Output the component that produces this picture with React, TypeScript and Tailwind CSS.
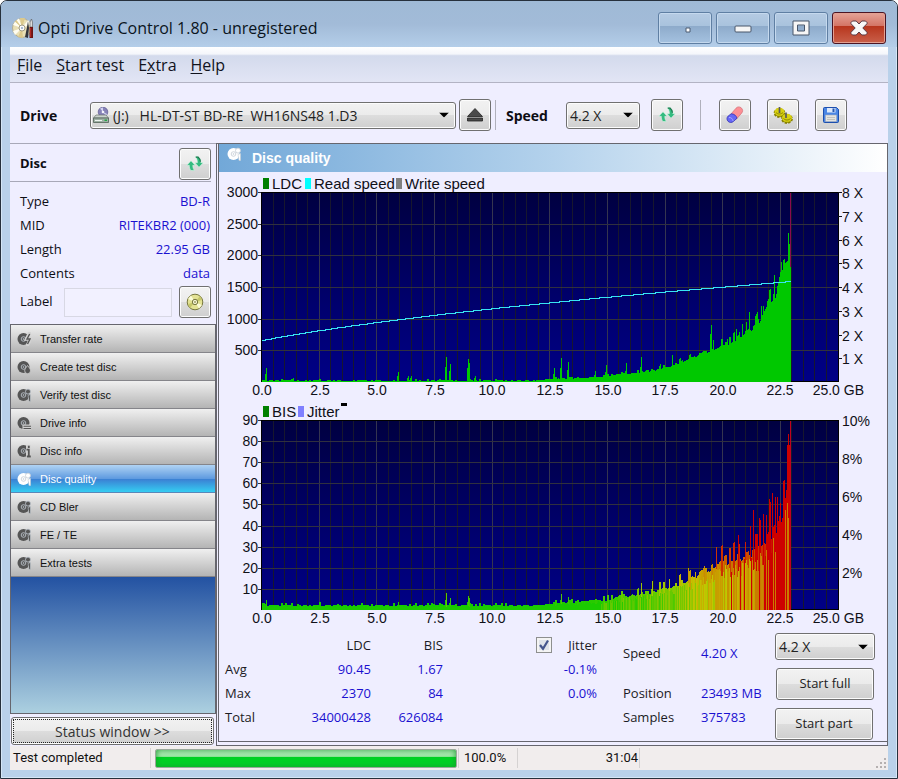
import { useState } from "react";
import type { ReactNode } from "react";
import clsx from "clsx";

const uiFont = "font-['Open_Sans','Noto_Sans',sans-serif]";
const arial = "font-['Liberation_Sans',Arial,sans-serif]";

const buttonFace =
  "rounded-[3px] border border-[#707070] bg-[linear-gradient(#f2f2f2_0%,#ebebeb_50%,#dddddd_50%,#cfcfcf_100%)] shadow-[inset_0_0_0_1px_#fcfcfc]";

const discInfo = [
  { label: "Type", value: "BD-R" },
  { label: "MID", value: "RITEKBR2 (000)" },
  { label: "Length", value: "22.95 GB" },
  { label: "Contents", value: "data" },
];

type BadgeName = "bolt" | "drop" | "magnifier" | "drive" | "info";

const navItems: { label: string; badge: BadgeName }[] = [
  { label: "Transfer rate", badge: "bolt" },
  { label: "Create test disc", badge: "drop" },
  { label: "Verify test disc", badge: "magnifier" },
  { label: "Drive info", badge: "drive" },
  { label: "Disc info", badge: "info" },
  { label: "Disc quality", badge: "magnifier" },
  { label: "CD Bler", badge: "magnifier" },
  { label: "FE / TE", badge: "magnifier" },
  { label: "Extra tests", badge: "magnifier" },
];

// ---- chart data -----------------------------------------------------------

const PLOT = { left: 42, top: 20, width: 577, height: 190 };
const BOTTOM = PLOT.top + PLOT.height;
const SCANNED = 530;

type Point = [number, number];

const ldcBase: Point[] = [
  [0, 1], [270, 1], [300, 3], [335, 4], [370, 8], [400, 12], [421, 19],
  [438, 26], [460, 33], [471, 38], [483, 46], [493, 53], [500, 62],
  [508, 77], [514, 84], [518, 98], [521, 112], [525, 116], [530, 116],
];

const ldcSpikes: Point[] = [
  [5, 14], [32, 4], [137, 10], [147, 6], [150, 6], [185, 25], [189, 18],
  [207, 23], [208, 19], [214, 6], [293, 14], [300, 24], [307, 20], [334, 11],
  [345, 17], [365, 19], [380, 25], [399, 18], [411, 27], [450, 57], [449, 48],
  [452, 42], [466, 43], [475, 53], [478, 50], [481, 58], [485, 60], [488, 70],
  [496, 70], [500, 76], [502, 76], [513, 107], [520, 120], [522, 121],
  [527, 149], [528, 138],
];

const bisBase: Point[] = [
  [0, 4], [270, 4], [310, 7], [345, 9], [370, 13], [400, 18], [425, 26],
  [445, 36], [460, 42], [480, 48], [495, 54], [505, 62], [515, 76],
  [520, 88], [523, 98], [526, 120], [530, 155],
];

const bisSpikes: Point[] = [
  [5, 10], [137, 8], [185, 17], [189, 12], [207, 14], [208, 12], [300, 16],
  [307, 13], [380, 27], [391, 29], [408, 31], [427, 42], [434, 38], [443, 44],
  [455, 63], [461, 57], [463, 54], [473, 58], [477, 75], [478, 66], [484, 68],
  [489, 84], [492, 100], [496, 76], [498, 92], [499, 90], [502, 96], [505, 95],
  [508, 111], [509, 108], [511, 117], [514, 113], [516, 113], [519, 107],
  [522, 129], [523, 130], [526, 165], [527, 176], [528, 165], [529, 189],
];

function noise(seed: number): number {
  const value = Math.sin(seed * 127.1 + 11.7) * 43758.5453;
  return value - Math.floor(value);
}

function interpolate(points: Point[], x: number): number {
  for (let i = 1; i < points.length; i++) {
    const [x0, y0] = points[i - 1];
    const [x1, y1] = points[i];
    if (x <= x1) return y0 + ((y1 - y0) * (x - x0)) / (x1 - x0);
  }
  return points[points.length - 1][1];
}

function buildBars(base: Point[], spikes: Point[], roughness: number): number[] {
  const bars: number[] = [];
  for (let x = 0; x < SCANNED; x++) {
    const level = interpolate(base, x);
    const step = Math.floor(x / 2);
    const jump = noise(step + 400) > 0.7 ? 1.8 : 0.7;
    bars.push(Math.round(level + noise(step) * jump * (1 + level * roughness)));
  }
  spikes.forEach(([x, height]) => {
    bars[x] = Math.max(bars[x], height);
    bars[x - 1] = Math.max(bars[x - 1], Math.round(height * 0.6));
  });
  return bars;
}

const ldcBars = buildBars(ldcBase, ldcSpikes, 0.14);
const bisBars = buildBars(bisBase, bisSpikes, 0.28);

function barColor(height: number): string {
  const ratio = Math.min(Math.max((height - 7) / 68, 0), 1);
  if (ratio < 0.38) {
    return `rgb(${Math.round(20 + 175 * (ratio / 0.38))} ${Math.round(203 - 14 * ratio)} 0)`;
  }
  return `rgb(${Math.round(195 + 10 * ratio)} ${Math.round(192 * (1 - (ratio - 0.38) / 0.62))} 0)`;
}

// Constant angular velocity: the squared speed grows linearly with position.
function readSpeedHeight(x: number): number {
  return Math.round(Math.sqrt(1764 + (8437 * x) / SCANNED));
}

const speedPath = Array.from({ length: Math.ceil(SCANNED / 2) }, (_, i) => {
  const x = i * 2;
  const y = BOTTOM - readSpeedHeight(x);
  return `${i === 0 ? `M${PLOT.left} ${y}` : `V${y}`}H${PLOT.left + x + 2}`;
}).join("");

type ChartProps = {
  title: string;
  gradientId: string;
  legend: { x: number; color: string; label: string }[];
  leftLabels: string[];
  rightLabels: { y: number; label: string }[];
  rightTicks?: boolean;
  children: ReactNode;
};

function Chart({
  title,
  gradientId,
  legend,
  leftLabels,
  rightLabels,
  rightTicks = false,
  children,
}: ChartProps) {
  const rowHeight = PLOT.height / leftLabels.length;

  return (
    <svg
      viewBox="0 0 668 228"
      role="img"
      aria-label={title}
      className={clsx("block h-auto w-full fill-[#101018] text-[14px]", arial)}
    >
      <defs>
        <linearGradient id={gradientId} x1="0" y1="0" x2="0" y2="1">
          <stop offset="0" stopColor="#000040" />
          <stop offset="0.6" stopColor="#00006e" />
          <stop offset="1" stopColor="#000086" />
        </linearGradient>
      </defs>

      {legend.map((item) => (
        <g key={item.label}>
          <rect x={item.x} y={6} width={6} height={11} fill={item.color} />
          <text x={item.x + 9} y={17} className="text-[15px]">
            {item.label}
          </text>
        </g>
      ))}

      <g shapeRendering="crispEdges">
        <rect
          x={PLOT.left}
          y={PLOT.top}
          width={PLOT.width}
          height={PLOT.height}
          fill={`url(#${gradientId})`}
        />
        {Array.from({ length: 51 }, (_, i) => (
          <rect
            key={i}
            x={Math.round(PLOT.left + i * 11.53)}
            y={PLOT.top}
            width={1}
            height={PLOT.height}
            fill={i % 5 === 0 ? "#35354f" : "#17172e"}
          />
        ))}
        {leftLabels.map((label, i) => (
          <rect
            key={label}
            x={PLOT.left - 3}
            y={Math.round(PLOT.top + i * rowHeight)}
            width={PLOT.width + 3}
            height={1}
            fill="#30303f"
          />
        ))}
        {children}
        <path
          d={`M${PLOT.left} ${BOTTOM}V${PLOT.top}H${PLOT.left + PLOT.width}V${BOTTOM}`}
          fill="none"
          stroke="#000"
        />
        <rect x={PLOT.left + SCANNED} y={BOTTOM - 1} width={47} height={1} fill="#000" />
      </g>

      {leftLabels.map((label, i) => (
        <text key={label} x={39} y={Math.round(PLOT.top + i * rowHeight) + 5} textAnchor="end">
          {label}
        </text>
      ))}
      {rightLabels.map((item) => (
        <g key={item.label}>
          {rightTicks ? (
            <rect x={PLOT.left + PLOT.width} y={item.y} width={4} height={1} />
          ) : null}
          <text x={623} y={item.y + 6}>
            {item.label}
          </text>
        </g>
      ))}
      {["0.0", "2.5", "5.0", "7.5", "10.0", "12.5", "15.0", "17.5", "20.0", "22.5"].map(
        (label, i) => (
          <text key={label} x={Math.round(43 + i * 57.6)} y={223} textAnchor="middle">
            {label}
          </text>
        ),
      )}
      <text x={645} y={223} textAnchor="end">
        25.0 GB
      </text>
    </svg>
  );
}

// ---- icons ----------------------------------------------------------------

function AppIcon() {
  return (
    <svg viewBox="0 0 22 22" className="size-[22px] shrink-0" aria-hidden="true">
      <circle cx="10" cy="11" r="9.5" fill="#e9dfb4" stroke="#b3ad92" />
      <path d="M10 11 1 8 3 4.500zM10 11 7 1.500 4 3.500zM10 11 16 3l3 4zM10 11 1 14l2 4z" fill="#fffdf0" />
      <path d="M10 11 8 1h5zM10 11 6 20l5 1zM10 11 3 4.500 4.500 3z" fill="#dcc98c" />
      <circle cx="10" cy="11" r="3" fill="#fafafa" stroke="#8c8770" strokeWidth=".8" />
      <circle cx="10" cy="11" r="1" fill="#8fa9c4" />
      <path d="M13 20 15 10l1-6 1 7-1 10z" fill="#31343c" />
      <path d="M18 10V5l1.500-3 1 3v5z" fill="#dcdcdc" stroke="#555" strokeWidth=".6" />
      <path d="M17.500 10h3.500v11h-3.500z" fill="#6c1413" />
      <path d="M18.300 11h.9v9h-.9z" fill="#c9302b" />
    </svg>
  );
}

function DriveIcon() {
  return (
    <svg viewBox="0 0 16 16" className="size-4" aria-hidden="true">
      <circle cx="10" cy="5" r="4.800" fill="#8783b8" stroke="#5b5890" strokeWidth=".7" />
      <path d="M10 5 7 1.500l3-1zM10 5l4 2-1 2z" fill="#d4d5f2" />
      <circle cx="10" cy="5" r="1.300" fill="#f4f4fb" />
      <path d="M3 8h10l2.500 3h-15z" fill="#c9d2cc" stroke="#6b776f" strokeWidth=".7" />
      <path d="M.5 11h15v4.500H.5z" fill="#9eb0a4" stroke="#4f5f55" strokeWidth=".8" />
      <path d="M2 13h7v1H2z" fill="#eef4ef" />
      <path d="M11.500 12.500h2.500v1.500h-2.500z" fill="#25a544" />
    </svg>
  );
}

function RefreshIcon() {
  return (
    <svg viewBox="0 0 18 18" className="size-[18px]" aria-hidden="true">
      <path
        d="M5 5.800.8 10.300h2.500c0 2.200.5 3.900 1.700 5.200h3.500C7.300 14.200 6.800 12.500 6.800 10.300h2.400z"
        fill="#35bb80"
        stroke="#d5f5e4"
        strokeWidth=".6"
      />
      <path
        d="M13 12.200 17.200 7.700h-2.300c0-2.600-.8-4.500-2.900-5.900H9.200c1.600 1.500 2.200 3.200 2.200 5.900H9z"
        fill="#35bb80"
        stroke="#d5f5e4"
        strokeWidth=".6"
      />
      <path d="M9.800 2.200h2.400c1.400 1.200 2.100 2.600 2.300 4.500" fill="none" stroke="#1d7a4f" strokeWidth="1.200" />
    </svg>
  );
}

function EjectIcon() {
  return (
    <svg viewBox="0 0 18 16" className="h-4 w-[18px]" aria-hidden="true">
      <path d="M9 1.500 16.500 9.500h-15z" fill="#4a4a4a" stroke="#222" strokeWidth=".8" />
      <path d="M1.500 11h15v3h-15z" fill="#4a4a4a" stroke="#222" strokeWidth=".8" />
    </svg>
  );
}

function EraserIcon() {
  return (
    <svg viewBox="0 0 18 18" className="size-[18px]" aria-hidden="true">
      <path
        d="M5 8 10 2.200c1.400-1.600 3.500-1.700 5.200-.4 1.700 1.500 1.900 3.700.4 5.400L10.500 13z"
        fill="#fd8f94"
        stroke="#d36d74"
        strokeWidth=".7"
      />
      <path
        d="M5.200 7.800 2.200 10c-1.600 1.500-1.600 3.800-.2 5.300 1.500 1.500 3.900 1.600 5.400.2l3.600-3.300C10.500 9.800 8 7.800 5.200 7.800z"
        fill="#6767f5"
        stroke="#3434b5"
        strokeWidth=".8"
      />
      <path d="M3 11.500c2-.2 3.900 1.400 4 3.400" fill="none" stroke="#a9a9ff" />
    </svg>
  );
}

function GearsIcon() {
  return (
    <svg viewBox="0 0 20 18" className="h-[18px] w-5" aria-hidden="true">
      <ellipse cx="6.500" cy="7" rx="5" ry="4" fill="#a39c00" stroke="#857f00" strokeDasharray="2.200 1.300" strokeWidth="1.800" />
      <ellipse cx="6.500" cy="5.800" rx="5" ry="4" fill="#d6cf10" />
      <ellipse cx="14" cy="13" rx="5" ry="4" fill="#a39c00" stroke="#857f00" strokeDasharray="2.200 1.300" strokeWidth="1.800" />
      <ellipse cx="14" cy="11.800" rx="5" ry="4" fill="#d6cf10" />
      <path d="M6.500 1v6M13 6.500V12" stroke="#59595d" strokeWidth="1.700" />
      <path d="M3 6.500c1.800 2 5 2 7 0M10.500 12.500c1.800 2 5 2 7 0" fill="none" stroke="#8a8400" />
    </svg>
  );
}

function SaveIcon() {
  return (
    <svg viewBox="0 0 18 18" className="size-[18px]" aria-hidden="true">
      <path d="M1.500 2.500q0-1 1-1h12l2 2v12q0 1-1 1h-13q-1 0-1-1z" fill="#4a86e4" stroke="#1d4fad" />
      <path d="M5 2h8.500v4.500H5z" fill="#dde9fa" />
      <path d="M10.500 2.500h2v3.500h-2z" fill="#2858b0" />
      <path d="M3.500 9h11v6.500h-11z" fill="#e4e4e0" stroke="#a3aab8" strokeWidth=".6" />
      <path d="M5 11.500h8M5 13.500h8" stroke="#b9b9b4" strokeWidth=".8" />
    </svg>
  );
}

function YellowDiscIcon() {
  return (
    <svg viewBox="0 0 18 18" className="size-[18px]" aria-hidden="true">
      <circle cx="9" cy="9" r="7.800" fill="#e4e394" stroke="#77773f" />
      <path d="M9 9 5 2.500 2 6zM9 9l4 6.500 3-3.500z" fill="#fbfbd6" />
      <path d="M9 9 14 3l2 4zM9 9l-5 6-2-4z" fill="#c6c76b" />
      <circle cx="9" cy="9" r="2.700" fill="#f2f2cf" stroke="#77773f" />
      <circle cx="9" cy="9" r=".9" fill="#999965" />
    </svg>
  );
}

function DiscBadgeIcon({ badge }: { badge: BadgeName }) {
  return (
    <svg viewBox="0 0 14 14" className="size-3.5 shrink-0" fill="none" stroke="currentColor" aria-hidden="true">
      <circle cx="6.500" cy="7" r="6" fill="currentColor" stroke="none" />
      <circle cx="6.500" cy="7" r="2.300" stroke="#c4ccd4" strokeWidth=".8" />
      <circle cx="6.500" cy="7" r=".8" fill="#c4ccd4" stroke="none" />
      {badge === "bolt" ? (
        <g>
          <path d="M13 0 9.500 7h4L10 14" stroke="#d2d2d2" strokeWidth="3.400" />
          <path d="M12.700 2 10 7h3l-2.500 5" strokeWidth="1.400" />
        </g>
      ) : null}
      {badge === "drop" ? (
        <path
          d="M10.500 5.500c2 2.500 3 3.800 3 5.300a2.900 2.900 0 0 1-5.800 0c0-1.500 1-2.800 2.800-5.300z"
          fill="currentColor"
          stroke="#d2d2d2"
          strokeWidth=".8"
        />
      ) : null}
      {badge === "magnifier" ? (
        <g>
          <path d="M13.500 6.500v7h-1.500l-1-6z" fill="currentColor" stroke="#c4ccd4" strokeWidth=".6" />
          <circle cx="11" cy="3.600" r="2.500" fill="currentColor" stroke="#c4ccd4" strokeWidth=".8" />
        </g>
      ) : null}
      {badge === "drive" ? (
        <g>
          <path d="M5.500 8.500H14V14H5.500z" fill="#cfcfcf" stroke="none" />
          <path d="M6.500 10.300H14M6.500 12.500H14" strokeWidth="1.100" />
        </g>
      ) : null}
      {badge === "info" ? (
        <g>
          <path d="M9 1h4.500v13H9z" fill="#d2d2d2" stroke="none" />
          <path d="M9.500 5.700h2.300V12M9.800 12.500h4M11.800 1.800v2.200" strokeWidth="1.800" />
        </g>
      ) : null}
    </svg>
  );
}

function DropArrow() {
  return (
    <svg
      viewBox="0 0 10 5"
      className="pointer-events-none absolute top-1/2 right-[7px] h-[5px] w-2.5 -translate-y-1/2"
      aria-hidden="true"
    >
      <path d="M0 0h10L5 5z" fill="#000" />
    </svg>
  );
}

// ---- window parts ---------------------------------------------------------

function CaptionButton({
  label,
  close = false,
  children,
}: {
  label: string;
  close?: boolean;
  children: ReactNode;
}) {
  return (
    <button
      type="button"
      aria-label={label}
      className={clsx(
        "grid h-8 w-[54px] place-items-center rounded-[3px] border",
        close
          ? "border-[#4b1423] bg-[linear-gradient(#e5a397_0%,#d37263_45%,#b8361e_45%,#c9604a_100%)] shadow-[inset_0_0_0_1px_#e3a091]"
          : "border-[#5f7fa3] bg-[linear-gradient(#b5cbe3_0%,#a8c2dd_45%,#8eabcb_45%,#a5c2e0_100%)] shadow-[inset_0_0_0_1px_#c5d9ee]",
      )}
    >
      {children}
    </button>
  );
}

function ToolButton({ label, children }: { label: string; children: ReactNode }) {
  return (
    <button
      type="button"
      aria-label={label}
      className={clsx("grid h-8 w-8 shrink-0 place-items-center", buttonFace)}
    >
      {children}
    </button>
  );
}

function SpeedSelect({ label, id, className }: { label: string; id: string; className: string }) {
  return (
    <div className={clsx("relative", className)}>
      <select
        id={id}
        aria-label={label}
        className={clsx("block h-[27px] w-full appearance-none pl-[3px] text-[14px] text-[#222]", buttonFace)}
      >
        <option>4.2 X</option>
      </select>
      <DropArrow />
    </div>
  );
}

function TitleBar() {
  return (
    <header className="flex h-[46px] items-center bg-[linear-gradient(#9fbad6_0%,#a2bbd8_50%,#b4cee9_100%)] pr-[11px] pl-[11px]">
      <span className="mt-2">
        <AppIcon />
      </span>
      <h1 className="ml-1 flex-1 pt-2 text-[16px] leading-6 text-[#0a1420]">
        Opti Drive Control 1.80 - unregistered
      </h1>
      <div className="flex gap-1 pt-2">
        <CaptionButton label="Options">
          <svg viewBox="0 0 6 6" className="mt-1 ml-1.5 size-1.5" aria-hidden="true">
            <path d="M1 1h4v4H1z" fill="#fff" stroke="#4a5a70" />
          </svg>
        </CaptionButton>
        <CaptionButton label="Minimize">
          <svg viewBox="0 0 18 8" className="mt-0.5 h-2 w-[18px]" aria-hidden="true">
            <rect x="1" y="1" width="16" height="6" rx="1" fill="#f6f6f6" stroke="#48566b" />
          </svg>
        </CaptionButton>
        <CaptionButton label="Maximize">
          <svg viewBox="0 0 18 16" className="h-4 w-[18px]" aria-hidden="true">
            <path
              d="M1 1h16v14H1zM5.500 5v6h7V5z"
              fill="#f6f6f6"
              fillRule="evenodd"
              stroke="#48566b"
            />
          </svg>
        </CaptionButton>
        <CaptionButton label="Close" close>
          <svg viewBox="0 0 18 16" className="h-4 w-[18px]" aria-hidden="true">
            <path
              d="M2.500 1h3.700L9 4l2.800-3h3.700L17 2.500v1.200L12.800 8l4.200 4.300v1.200L15.500 15h-3.700L9 12l-2.800 3H2.500L1 13.500v-1.200L5.200 8 1 3.700V2.500z"
              fill="#f8f8f8"
              stroke="#5a3a44"
              strokeLinejoin="round"
            />
          </svg>
        </CaptionButton>
      </div>
    </header>
  );
}

function MenuBar() {
  const items = [
    ["", "F", "ile"],
    ["", "S", "tart test"],
    ["E", "x", "tra"],
    ["", "H", "elp"],
  ];
  return (
    <nav
      aria-label="Main menu"
      className="flex h-9 items-center gap-3.5 border-b border-[#b3b3c4] bg-[linear-gradient(#ffffff_0%,#f4f6fb_20%,#d3daec_25%,#e2e5f5_100%)] px-[7px] text-[16px] text-[#10121c]"
    >
      {items.map(([before, key, after]) => (
        <button key={key} type="button">
          {before}
          <span className="underline underline-offset-2">{key}</span>
          {after}
        </button>
      ))}
    </nav>
  );
}

function Toolbar() {
  return (
    <div className="flex h-[60px] items-center pt-1 pr-10 pl-2.5">
      <label htmlFor="drive" className="w-[70px] text-[14px] font-bold">
        Drive
      </label>
      <div className="relative max-w-[366px] flex-1">
        <span className="pointer-events-none absolute top-1/2 left-[3px] -translate-y-1/2">
          <DriveIcon />
        </span>
        <select
          id="drive"
          className={clsx(
            "block h-[27px] w-full appearance-none pl-[22px] text-[14px] text-[#222]",
            buttonFace,
          )}
        >
          <option>{"(J:)\u00a0\u00a0 HL-DT-ST BD-RE\u00a0 WH16NS48 1.D3"}</option>
        </select>
        <DropArrow />
      </div>
      <div className="ml-[3px]">
        <ToolButton label="Eject">
          <EjectIcon />
        </ToolButton>
      </div>
      <div className="ml-1 h-[30px] w-px bg-[#b0b0bc]" />
      <label htmlFor="speed" className="ml-2.5 w-[60px] text-[14px] font-bold">
        Speed
      </label>
      <SpeedSelect label="Speed" id="speed" className="w-[74px]" />
      <div className="ml-[11px]">
        <ToolButton label="Refresh speed">
          <RefreshIcon />
        </ToolButton>
      </div>
      <div className="ml-[17px] h-[30px] w-px bg-[#b0b0bc]" />
      <div className="ml-[18px] flex gap-4">
        <ToolButton label="Erase">
          <EraserIcon />
        </ToolButton>
        <ToolButton label="Settings">
          <GearsIcon />
        </ToolButton>
        <ToolButton label="Save">
          <SaveIcon />
        </ToolButton>
      </div>
    </div>
  );
}

function Sidebar() {
  const [active, setActive] = useState("Disc quality");

  return (
    <aside className="flex w-[206px] shrink-0 flex-col border-t border-[#a8a8b8]">
      <div className="mr-[5px] flex h-[38px] items-center justify-between border-b border-[#a8a8b8] pt-0.5 pl-2.5">
        <h2 className="text-[13px] font-bold">Disc</h2>
        <ToolButton label="Refresh disc">
          <RefreshIcon />
        </ToolButton>
      </div>
      <dl className="mt-[7px] mr-1.5 ml-2.5 text-[13px] leading-6">
        {discInfo.map((row) => (
          <div key={row.label} className="flex justify-between">
            <dt>{row.label}</dt>
            <dd className="text-[#1a10d0]">{row.value}</dd>
          </div>
        ))}
      </dl>
      <div className="mt-px mr-[5px] mb-1.5 ml-2.5 flex items-center text-[13px]">
        <label htmlFor="disc-label" className="w-11">
          Label
        </label>
        <input
          id="disc-label"
          type="text"
          className="h-[29px] min-w-0 flex-1 border border-[#d8d8e4] bg-[#f2f1ff] px-1 outline-none"
        />
        <div className="ml-[7px]">
          <ToolButton label="Read label">
            <YellowDiscIcon />
          </ToolButton>
        </div>
      </div>

      <nav aria-label="Tests" className="flex flex-1 flex-col border border-[#66666e]">
        {navItems.map((item) => (
          <button
            key={item.label}
            type="button"
            aria-current={item.label === active ? "page" : undefined}
            onClick={() => setActive(item.label)}
            className={clsx(
              "flex h-7 shrink-0 items-center gap-[9px] border-b pt-px pl-1.5 text-left text-[11px]",
              arial,
              item.label === active
                ? "border-[#5a87b8] bg-[linear-gradient(#b0d3f4_0%,#5f9be0_50%,#3b7fd3_52%,#35cdf2_100%)] text-white"
                : "border-[#85858a] bg-[linear-gradient(#f0f0f0,#b4b4b4)] text-[#111]",
            )}
          >
            <span className={item.label === active ? "text-white" : "text-[#555]"}>
              <DiscBadgeIcon badge={item.badge} />
            </span>
            {item.label}
          </button>
        ))}
        <div className="flex-1 bg-[linear-gradient(#2352a2,#acd0e0)]" />
      </nav>

      <div className="pt-[3px] pr-0.5 pb-px pl-px">
        <button type="button" className={clsx("block h-7 w-full p-px text-[14px] text-[#333]", buttonFace)}>
          <span className="flex h-full items-center justify-center border border-dotted border-[#222]">
            Status window &gt;&gt;
          </span>
        </button>
      </div>
    </aside>
  );
}

function ResultsTable({ jitter, onJitterChange }: { jitter: boolean; onJitterChange: (on: boolean) => void }) {
  return (
    <table className="w-[372px] table-fixed border-collapse self-start text-right text-[13px] leading-6 text-[#1a10d0]">
      <colgroup>
        <col className="w-[60px]" />
        <col className="w-[86px]" />
        <col className="w-[72px]" />
        <col className="w-[154px]" />
      </colgroup>
      <thead>
        <tr className="text-[#1b1b24]">
          <td className="p-0" />
          <th scope="col" className="p-0 font-normal">LDC</th>
          <th scope="col" className="p-0 font-normal">BIS</th>
          <th scope="col" className="p-0 font-normal">
            <label className="flex items-center justify-end gap-4">
              <span className="relative inline-grid size-4 place-items-center">
                <input
                  type="checkbox"
                  checked={jitter}
                  onChange={(event) => onJitterChange(event.target.checked)}
                  className="size-4 appearance-none border border-[#8e8f8f] bg-[#dfe3ea] shadow-[inset_0_0_0_2px_#f4f4f4]"
                />
                {jitter ? (
                  <svg viewBox="0 0 12 12" className="pointer-events-none absolute size-3" aria-hidden="true">
                    <path d="M2 6l3 3.800L10 1.500" fill="none" stroke="#44558c" strokeWidth="2.200" />
                  </svg>
                ) : null}
              </span>
              Jitter
            </label>
          </th>
        </tr>
      </thead>
      <tbody>
        {[
          ["Avg", "90.45", "1.67", "-0.1%"],
          ["Max", "2370", "84", "0.0%"],
          ["Total", "34000428", "626084", ""],
        ].map(([label, ldc, bis, jitterValue]) => (
          <tr key={label}>
            <th scope="row" className="p-0 text-left font-normal text-[#1b1b24]">
              {label}
            </th>
            <td className="p-0">{ldc}</td>
            <td className="p-0">{bis}</td>
            <td className="p-0">{jitterValue}</td>
          </tr>
        ))}
      </tbody>
    </table>
  );
}

function QualityPanel() {
  const [jitter, setJitter] = useState(true);

  return (
    <main className="min-w-0 flex-1 border border-[#66666e] pb-[3px] pl-px">
      <section className="h-full border-b border-l border-[#66666e]">
        <div className="flex h-7 items-center bg-[linear-gradient(90deg,#72a8d8_0%,#b4d2ec_50%,#ffffff_100%)] pl-2 text-white">
          <span className="mb-2">
            <DiscBadgeIcon badge="magnifier" />
          </span>
          <h2 className={clsx("ml-[11px] text-[14px] font-bold", arial)}>Disc quality</h2>
        </div>

        <Chart
          title="LDC errors and read speed"
          gradientId="ldc-background"
          legend={[
            { x: 44, color: "#008000", label: "LDC" },
            { x: 86, color: "#00ffff", label: "Read speed" },
            { x: 177, color: "#808080", label: "Write speed" },
          ]}
          leftLabels={["3000", "2500", "2000", "1500", "1000", "500"]}
          rightLabels={[8, 7, 6, 5, 4, 3, 2, 1].map((speed, i) => ({
            y: Math.round(20 + i * 23.75),
            label: `${speed} X`,
          }))}
          rightTicks
        >
          {ldcBars.map((height, x) => (
            <rect key={x} x={PLOT.left + x} y={BOTTOM - height} width={1} height={height} fill="#00c800" />
          ))}
          <rect x={PLOT.left + SCANNED - 1} y={PLOT.top} width={1} height={75} fill="#8a0a50" />
          <path d={speedPath} fill="none" stroke="#38e4f2" />
        </Chart>

        <Chart
          title="BIS errors and jitter"
          gradientId="bis-background"
          legend={[
            { x: 44, color: "#008000", label: "BIS" },
            { x: 79, color: "#8080ff", label: "Jitter" },
          ]}
          leftLabels={["90", "80", "70", "60", "50", "40", "30", "20", "10"]}
          rightLabels={[10, 8, 6, 4, 2].map((percent, i) => ({
            y: 20 + i * 38,
            label: `${percent}%`,
          }))}
        >
          <rect x={122} y={3} width={6} height={3} fill="#000" />
          {bisBars.map((height, x) => {
            const level = interpolate(bisBase, x);
            const under = Math.min(height, Math.round(level * (0.7 + noise(x + 90) * 0.35)));
            // Past the outer edge most columns fail outright; before it only a few do.
            const failing = noise(x + 7) > (x > 502 ? 0.15 : x > 450 ? 0.9 : 1);
            const tone = failing ? 80 : Math.min(level * 0.7 + noise(x + 50) * 14, 48);
            return (
              <g key={x}>
                <rect x={PLOT.left + x} y={BOTTOM - height} width={1} height={height} fill={barColor(height)} />
                <rect
                  x={PLOT.left + x}
                  y={BOTTOM - under}
                  width={1}
                  height={under}
                  fill={barColor(x < 340 ? 8 : tone)}
                />
              </g>
            );
          })}
          <rect x={PLOT.left + SCANNED - 1} y={PLOT.top} width={1} height={PLOT.height} fill="#c00020" />
        </Chart>

        <div className="flex pt-[5px] pl-1.5">
          <ResultsTable jitter={jitter} onJitterChange={setJitter} />
          <dl className="ml-[26px] grid w-[152px] grid-cols-[78px_1fr] content-start pt-2 text-[13px] leading-6 whitespace-nowrap text-[#1b1b24]">
            <dt className="mb-4">Speed</dt>
            <dd className="text-[#1a10d0]">4.20 X</dd>
            <dt>Position</dt>
            <dd className="text-[#1a10d0]">23493 MB</dd>
            <dt>Samples</dt>
            <dd className="text-[#1a10d0]">375783</dd>
          </dl>
          <div className="mb-px flex w-[100px] flex-col gap-2 text-[13px] text-[#222]">
            <SpeedSelect label="Test speed" id="test-speed" className="w-full" />
            <button type="button" className={clsx("ml-px h-8 w-[98px]", buttonFace)}>
              Start full
            </button>
            <button type="button" className={clsx("h-8 w-[98px]", buttonFace)}>
              Start part
            </button>
          </div>
        </div>
      </section>
    </main>
  );
}

function StatusBar() {
  return (
    <footer className="flex h-6 items-center bg-[#f1eded] font-[Roboto,sans-serif] text-[13px] text-[#111]">
      <span className="w-[141px] border-r border-[#d5d2d2] pl-[3px]">Test completed</span>
      <div
        role="progressbar"
        aria-label="Test progress"
        aria-valuenow={100}
        className="ml-1 h-[19px] w-[302px] rounded-[2px] border border-[#9aa89a] bg-[linear-gradient(#c5f0c8_0%,#9fe8a6_38%,#00cf22_40%,#00d62a_100%)] shadow-[inset_0_0_6px_#159a2a]"
      />
      <span className="ml-px w-[59px] border-l border-[#d5d2d2] pl-[5px]">100.0%</span>
      <span className="w-[123px] border-x border-[#d5d2d2] pr-px text-right">31:04</span>
      <svg viewBox="0 0 12 12" className="mt-auto mr-px mb-px ml-auto size-3" fill="#b5b0b0" aria-hidden="true">
        <path d="M9 1h2v2H9zM5 5h2v2H5zM9 5h2v2H9zM1 9h2v2H1zM5 9h2v2H5zM9 9h2v2H9z" />
      </svg>
    </footer>
  );
}

export default function App() {
  return (
    <div
      className={clsx(
        "flex min-h-screen flex-col overflow-hidden rounded-t-[7px] border border-[#26303c] bg-[#b9d1ea] text-[#0d0d14] shadow-[inset_0_0_0_1px_#d5e6f6]",
        uiFont,
      )}
    >
      <TitleBar />
      <div className="mx-[9px] mb-2 flex flex-1 flex-col bg-[#efeeff]">
        <MenuBar />
        <Toolbar />
        <div className="flex flex-1">
          <Sidebar />
          <QualityPanel />
        </div>
        <StatusBar />
      </div>
    </div>
  );
}
